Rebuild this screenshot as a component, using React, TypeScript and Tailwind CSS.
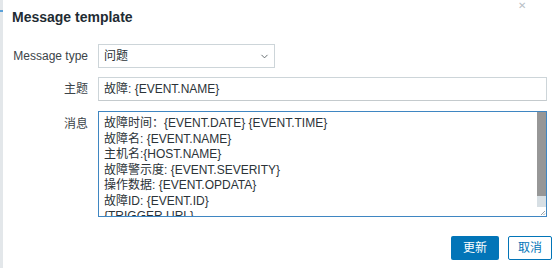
import { ChevronDown } from 'lucide-react'

const lines = [
  '故障时间：{EVENT.DATE} {EVENT.TIME}',
  '故障名: {EVENT.NAME}',
  '主机名:{HOST.NAME}',
  '故障警示度: {EVENT.SEVERITY}',
  '操作数据: {EVENT.OPDATA}',
  '故障ID: {EVENT.ID}',
  '{TRIGGER.URL}',
]

function MessageBox() {
  return (
    <div className="relative h-[106px] border border-[#3f86c2] bg-white flex overflow-hidden">
      <div className="flex-1 pl-[5px] pt-[4px] text-[12px] leading-[15.5px] text-[#2b3338] whitespace-pre overflow-hidden">
        {lines.map((l) => (
          <div key={l}>{l}</div>
        ))}
      </div>
      <div className="w-[9px] flex flex-col bg-[#d7dfe4]">
        <div className="h-[84px] bg-[#979797]" />
        <div className="flex-1" />
        <div className="h-[9px] bg-white flex items-end justify-end">
          <svg width="7" height="7" viewBox="0 0 7 7">
            <path d="M6 2 L2 6 M6 4.5 L4.5 6" stroke="#9aa3a8" strokeWidth="1" />
          </svg>
        </div>
      </div>
    </div>
  )
}

export default function App() {
  return (
    <div className="w-[554px] h-[268px] bg-white flex overflow-hidden font-['Liberation_Sans','Noto_Sans_CJK_SC',sans-serif]">
      <div className="w-[3px] bg-[#e3e7ea] flex flex-col">
        <div className="h-[10px]" />
        <div className="h-[2px] bg-[#5aa0d8]" />
      </div>

      <div className="flex-1 relative">
        <div className="absolute right-[28px] top-[1px] text-[#b7c0c6] text-[10px] leading-none">✕</div>

        <div className="pl-[9px] pt-[9px] text-[14px] leading-[17px] font-bold text-[#1f2c33]">
          Message template
        </div>

        <div className="mt-[18px] pl-[9px] pr-[7px] grid grid-cols-[76px_1fr] gap-x-[10px] text-[12px] text-[#3b4449]">
          <div className="flex items-center justify-end h-[24px]">Message type</div>
          <div className="w-[177px] h-[24px] border border-[#cdd5d9] flex items-center pl-[5px] pr-[4px] text-[#2b3338]">
            <span className="flex-1">问题</span>
            <ChevronDown size={11} strokeWidth={2} className="text-[#5a6266]" />
          </div>

          <div className="mt-[9px] flex items-center justify-end h-[24px]">主题</div>
          <div className="mt-[9px] h-[24px] border border-[#cdd5d9] border-b-[#c4cacd] flex items-center pl-[5px] text-[#2b3338]">
            故障: {'{EVENT.NAME}'}
          </div>

          <div className="mt-[10px] pt-[5px] text-right leading-[16px]">消息</div>
          <div className="mt-[10px]">
            <MessageBox />
          </div>
        </div>

        <div className="mt-[19px] pr-[2px] flex justify-end gap-[9px] text-[12px]">
          <button className="w-[48px] h-[24px] rounded-[2px] bg-[#0275b8] text-white">更新</button>
          <button className="w-[44px] h-[24px] rounded-[2px] border border-[#0275b8] bg-white text-[#0275b8]">
            取消
          </button>
        </div>
      </div>
    </div>
  )
}
